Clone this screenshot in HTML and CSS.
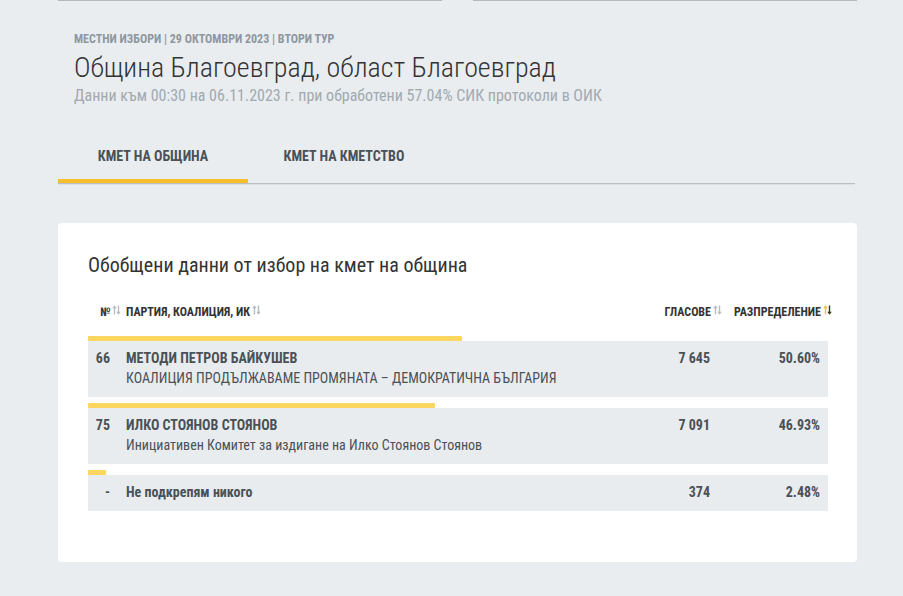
FILE: index.html
```html
<!DOCTYPE html>
<html lang="bg">
<head>
  <meta charset="UTF-8">
  <title>Община Благоевград</title>
  <link rel="stylesheet" href="styles.css">
</head>
<body>

<div class="page">
  <div class="top-lines">
    <span></span>
    <span></span>
  </div>

  <div class="head">
    <div class="kicker">МЕСТНИ ИЗБОРИ | 29 ОКТОМВРИ 2023 | ВТОРИ ТУР</div>
    <h1>Община Благоевград, област Благоевград</h1>
    <div class="info">Данни към 00:30 на 06.11.2023 г. при обработени 57.04% СИК протоколи в ОИК</div>
  </div>

  <div class="tabs">
    <div class="tab active">КМЕТ НА ОБЩИНА</div>
    <div class="tab">КМЕТ НА КМЕТСТВО</div>
  </div>

  <div class="card">
    <h2>Обобщени данни от избор на кмет на община</h2>

    <div class="thead">
      <div class="c-num">№<svg class="sort" viewBox="0 0 9 10"><path class="up" d="M1.8 9.5V3.2H0.2L2.5 0.3L4.8 3.2H3.2V9.5Z"/><path class="down" d="M5.8 0.5V6.8H4.2L6.5 9.7L8.8 6.8H7.2V0.5Z"/></svg></div>
      <div class="c-name">ПАРТИЯ, КОАЛИЦИЯ, ИК<svg class="sort" viewBox="0 0 9 10"><path class="up" d="M1.8 9.5V3.2H0.2L2.5 0.3L4.8 3.2H3.2V9.5Z"/><path class="down" d="M5.8 0.5V6.8H4.2L6.5 9.7L8.8 6.8H7.2V0.5Z"/></svg></div>
      <div class="c-votes">ГЛАСОВЕ<svg class="sort" viewBox="0 0 9 10"><path class="up" d="M1.8 9.5V3.2H0.2L2.5 0.3L4.8 3.2H3.2V9.5Z"/><path class="down" d="M5.8 0.5V6.8H4.2L6.5 9.7L8.8 6.8H7.2V0.5Z"/></svg></div>
      <div class="c-pct">РАЗПРЕДЕЛЕНИЕ<svg class="sort on" viewBox="0 0 9 10"><path class="up" d="M1.8 9.5V3.2H0.2L2.5 0.3L4.8 3.2H3.2V9.5Z"/><path class="down" d="M5.8 0.5V6.8H4.2L6.5 9.7L8.8 6.8H7.2V0.5Z"/></svg></div>
    </div>

    <div class="result">
      <div class="bar" style="width: 50.6%"></div>
      <div class="row">
        <div class="c-num">66</div>
        <div class="c-name">
          <div class="cand">МЕТОДИ ПЕТРОВ БАЙКУШЕВ</div>
          <div class="party">КОАЛИЦИЯ ПРОДЪЛЖАВАМЕ ПРОМЯНАТА – ДЕМОКРАТИЧНА БЪЛГАРИЯ</div>
        </div>
        <div class="c-votes">7 645</div>
        <div class="c-pct">50.60%</div>
      </div>
    </div>

    <div class="result">
      <div class="bar" style="width: 46.93%"></div>
      <div class="row">
        <div class="c-num">75</div>
        <div class="c-name">
          <div class="cand">ИЛКО СТОЯНОВ СТОЯНОВ</div>
          <div class="party">Инициативен Комитет за издигане на Илко Стоянов Стоянов</div>
        </div>
        <div class="c-votes">7 091</div>
        <div class="c-pct">46.93%</div>
      </div>
    </div>

    <div class="result">
      <div class="bar" style="width: 2.48%"></div>
      <div class="row">
        <div class="c-num">-</div>
        <div class="c-name">
          <div class="cand">Не подкрепям никого</div>
        </div>
        <div class="c-votes">374</div>
        <div class="c-pct">2.48%</div>
      </div>
    </div>
  </div>
</div>

</body>
</html>
```

FILE: styles.css
```css
body {
  margin: 0;
  background-color: #e9edf0;
  font-family: "Roboto Condensed", "Liberation Sans Narrow", "DejaVu Sans Condensed", Roboto, sans-serif;
  color: #333;
}
.page {
  width: 799px;
  margin-left: 58px;
}
.top-lines {
  display: flex;
  justify-content: space-between;
}
.top-lines span {
  display: block;
  width: 384px;
  height: 1px;
  background-color: #b5b9bd;
}
.head {
  padding: 31px 16px 0;
}
.kicker {
  font-size: 12px;
  font-weight: bold;
  color: #8e979f;
  line-height: 14px;
}
h1 {
  margin: 5px 0 0;
  font-size: 28px;
  font-weight: 300;
  color: #333;
  line-height: 34px;
}
.info {
  margin-top: 2px;
  font-size: 16px;
  color: #a2a9af;
  line-height: 18px;
}
.tabs {
  display: flex;
  margin-top: 28px;
  width: 797px;
  border-bottom: 1px solid #bcc0c3;
  box-shadow: 0 1px 0 rgba(0, 0, 0, 0.05);
}
.tab {
  width: 190px;
  text-align: center;
  font-size: 14px;
  font-weight: bold;
  color: #4a5157;
  line-height: 17px;
  padding: 15px 0 14px;
  border-bottom: 4px solid transparent;
}
.tab.active {
  border-bottom-color: #f6c02a;
}
.tab + .tab {
  width: 192px;
}
.card {
  margin-top: 39px;
  background-color: #fff;
  border-radius: 4px;
  padding: 30px 30px 45px;
}
h2 {
  margin: 0;
  font-size: 20px;
  font-weight: normal;
  color: #333;
  line-height: 24px;
}
.thead, .row {
  display: flex;
  width: 740px;
}
.thead {
  width: 744px;
  margin-top: 28px;
  margin-bottom: 17px;
  font-size: 12px;
  font-weight: bold;
  color: #333;
  line-height: 14px;
}
.c-num {
  width: 38px;
  flex: none;
  padding-right: 16px;
  text-align: right;
  box-sizing: border-box;
}
.c-name {
  flex: 1;
}
.c-votes {
  width: 110px;
  text-align: right;
  flex: none;
}
.c-pct {
  width: 110px;
  text-align: right;
  flex: none;
  padding-right: 8px;
}
.thead .c-num {
  padding: 0 0 0 12px;
  text-align: left;
}
.thead .c-pct {
  padding-right: 0;
}
.sort {
  width: 9px;
  height: 10px;
  margin-left: 2px;
  vertical-align: 1px;
}
.sort path {
  fill: #b7bcc0;
}
.sort.on .up {
  fill: #f6c02a;
}
.sort.on .down {
  fill: #333;
}
.result {
  margin-bottom: 6px;
}
.bar {
  height: 5px;
  background-color: #fdd660;
  border-radius: 1px;
}
.row {
  background-color: #e9ecef;
  padding: 7px 0 9px;
  font-size: 14px;
  line-height: 20px;
  color: #4a5157;
}
.row .c-num, .row .c-votes, .row .c-pct {
  font-weight: bold;
}
.cand {
  font-weight: bold;
}
.party {
  color: #4a5157;
}
```
